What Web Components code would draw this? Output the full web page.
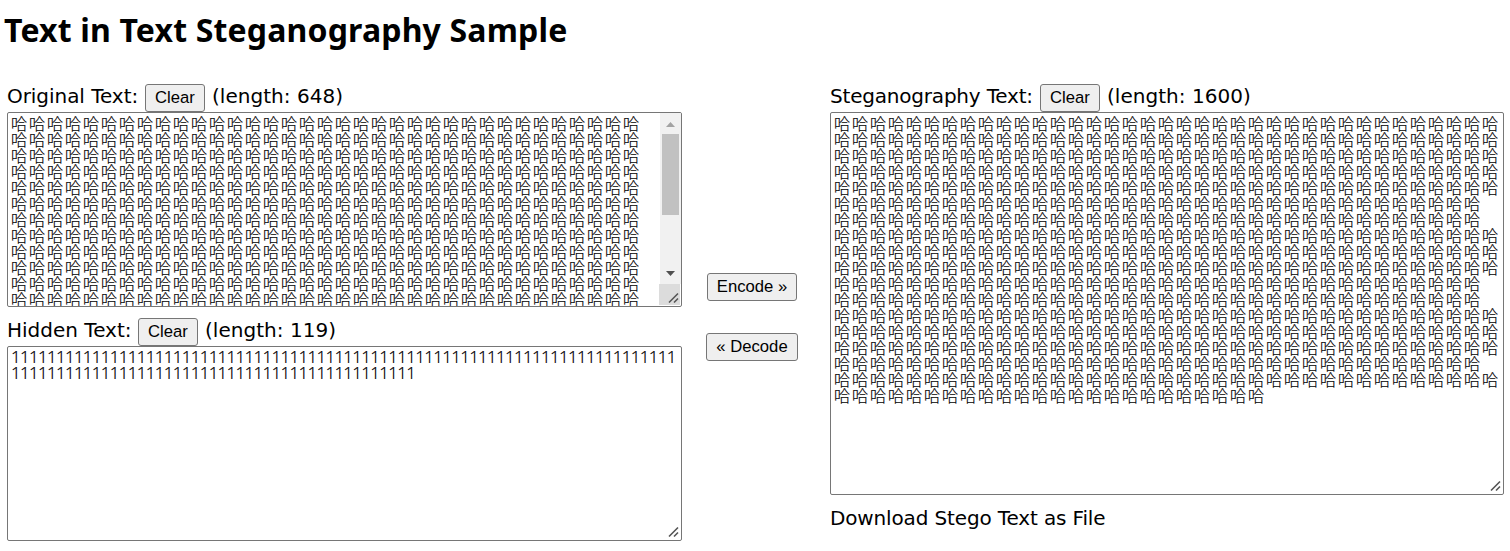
<!DOCTYPE html>
<html lang="en">
<head>
<meta charset="utf-8">
<title>Text in Text Steganography Sample</title>
<style>
body { margin: 0; background: #fff; color: #000; }
</style>
</head>
<body>
<stego-app></stego-app>
<script>
class PushButton extends HTMLElement {
  constructor() {
    super();
    this.attachShadow({ mode: 'open' }).innerHTML = `
      <style>
        :host { display: block; flex: none; }
        button { display: block; box-sizing: border-box; width: 100%; height: 28px; padding: 0 0 1px;
          border: 1px solid #767676; border-radius: 3px; background: #efefef; color: #000;
          font: 16.67px/24px "Liberation Sans", Arial, sans-serif; white-space: nowrap; }
      </style>
      <button type="button"><slot></slot></button>`;
  }
}
customElements.define('push-button', PushButton);

class ScrollBar extends HTMLElement {
  constructor() {
    super();
    this.attachShadow({ mode: 'open' }).innerHTML = `
      <style>
        :host { display: flex; flex-direction: column; align-items: center; width: 21px; height: 171px; background: #f1f1f1; }
        svg { display: block; width: 21px; height: 21px; }
        div { width: 17px; height: 81px; margin-bottom: auto; background: #c1c1c1; }
      </style>
      <svg viewBox="0 0 21 21"><path d="M6 14L10.5 9L15 14Z" fill="#a3a3a3"/></svg>
      <div></div>
      <svg viewBox="0 0 21 21"><path d="M6 8L10.5 13L15 8Z" fill="#505050"/></svg>`;
  }
}
customElements.define('scroll-bar', ScrollBar);

/* Multi-line field: "rows" is a list of character counts, one per line. */
class TextBox extends HTMLElement {
  connectedCallback() {
    const ch = this.getAttribute('char');
    const lines = this.getAttribute('rows').split(' ').map(n => `<div>${ch.repeat(+n)}</div>`).join('');
    const scroll = this.hasAttribute('scroll');
    this.attachShadow({ mode: 'open' }).innerHTML = `
      <style>
        :host { display: flex; position: relative; box-sizing: border-box; overflow: hidden;
          border: 1px solid #767676; border-radius: 2px; background: #fff; }
        .text { flex: 1; min-width: 0; padding: 2px 0 0 3px; white-space: pre; }
        .text div { height: 16px; line-height: 16px; }
        .cjk { font-family: "Noto Sans CJK JP", sans-serif; font-size: 16px; font-weight: 300; letter-spacing: 2px; -webkit-text-stroke: .15px #000; }
        .num { font-family: "Noto Sans", sans-serif; font-size: 17px; font-weight: 300; letter-spacing: -0.724px; -webkit-text-stroke: .15px #000; }
        .grip { position: absolute; right: 1px; bottom: 1px; width: 21px; height: 21px; }
        .grip.on { background: #dcdcdc; }
      </style>
      <div class="text ${ch === '1' ? 'num' : 'cjk'}">${lines}</div>
      ${scroll ? '<scroll-bar></scroll-bar>' : ''}
      <svg class="grip ${scroll ? 'on' : ''}" viewBox="0 0 21 21"><path d="M10 18.5L19 9.5M15 18.5L19 14.5" fill="none" stroke="#555" stroke-width="1.6"/></svg>`;
  }
}
customElements.define('text-box', TextBox);

class FieldHead extends HTMLElement {
  constructor() {
    super();
    this.attachShadow({ mode: 'open' }).innerHTML = `
      <style>
        :host { display: flex; height: 28px; font: 20px/24px "DejaVu Sans", Verdana, sans-serif; white-space: nowrap; }
        .label { width: var(--label-width); letter-spacing: var(--label-spacing, 0); }
        push-button { width: 60px; }
        .length { margin-left: 7px; letter-spacing: .03px; }
      </style>
      <span class="label"><slot></slot></span>
      <push-button>Clear</push-button>
      <span class="length"><slot name="length"></slot></span>`;
  }
}
customElements.define('field-head', FieldHead);

class StegoApp extends HTMLElement {
  constructor() {
    super();
    this.attachShadow({ mode: 'open' }).innerHTML = `
      <style>
        :host { display: block; box-sizing: border-box; width: 1510px; height: 551px; overflow: hidden; padding: 8px 6px 0 7px; }
        h1 { margin: 0 0 32px -3px; font: bold 32px/44px "Noto Sans", sans-serif; letter-spacing: .17px; white-space: nowrap; }
        main { display: grid; grid-template-columns: 675px 148px 674px; }
        .left text-box { height: 195px; }
        .left text-box + field-head { margin-top: 11px; }
        .mid { display: flex; flex-direction: column; align-items: center; gap: 32px; padding: 189px 8px 0 0; }
        .enc { width: 90px; }
        .dec { width: 92px; }
        .right text-box { height: 383px; }
        p { margin: 11px 0 0; font: 20px/24px "DejaVu Sans", Verdana, sans-serif; letter-spacing: -.14px; }
      </style>
      <h1>Text in Text Steganography Sample</h1>
      <main>
        <section class="left">
          <field-head style="--label-width:138px;--label-spacing:-.05px">Original Text:<span slot="length">(length: 648)</span></field-head>
          <text-box char="哈" scroll rows="35 35 35 35 35 35 35 35 35 35 35 35"></text-box>
          <field-head style="--label-width:131px">Hidden Text:<span slot="length">(length: 119)</span></field-head>
          <text-box char="1" rows="74 45"></text-box>
        </section>
        <section class="mid">
          <push-button class="enc">Encode »</push-button>
          <push-button class="dec">« Decode</push-button>
        </section>
        <section class="right">
          <field-head style="--label-width:210px;--label-spacing:-.2px">Steganography Text:<span slot="length">(length: 1600)</span></field-head>
          <text-box char="哈" rows="37 37 37 37 37 36 36 37 37 37 36 36 37 37 37 36 37 24"></text-box>
          <p>Download Stego Text as File</p>
        </section>
      </main>`;
  }
}
customElements.define('stego-app', StegoApp);
</script>
</body>
</html>
